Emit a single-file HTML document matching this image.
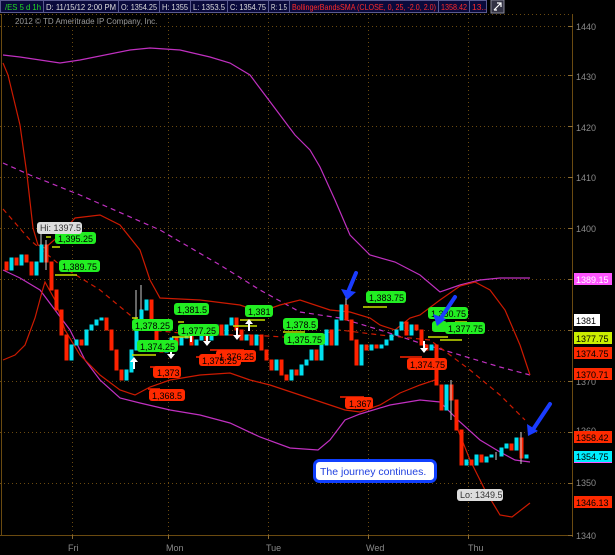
<!DOCTYPE html>
<html><head><meta charset="utf-8"><style>
html,body{margin:0;padding:0;background:#000;}
body{width:615px;height:555px;overflow:hidden;position:relative;font-family:"Liberation Sans",sans-serif;}
svg{position:absolute;left:0;top:0;}
</style></head><body>
<svg width="615" height="555" xmlns="http://www.w3.org/2000/svg" font-family="Liberation Sans, sans-serif">
<rect width="615" height="555" fill="#000"/>
<!-- header -->
<rect x="0" y="0" width="487" height="13" fill="#0a0a3c"/>
<g stroke="#5a5a90" stroke-width="1" fill="none">
<rect x="0.5" y="0.5" width="486" height="12"/>
<path d="M43.5 0v13M118.5 0v13M159.5 0v13M190.5 0v13M227.5 0v13M268.5 0v13M289.5 0v13M438.5 0v13M469.5 0v13"/>
</g>
<g font-size="8.5" fill="#dcdcdc">
<text x="5" y="10" fill="#22dd22" textLength="36" lengthAdjust="spacingAndGlyphs">/ES 5 d 1h</text>
<text x="46" y="10" textLength="70" lengthAdjust="spacingAndGlyphs">D: 11/15/12 2:00 PM</text>
<text x="121" y="10" textLength="36" lengthAdjust="spacingAndGlyphs">O: 1354.25</text>
<text x="162" y="10" textLength="26" lengthAdjust="spacingAndGlyphs">H: 1355</text>
<text x="193" y="10" textLength="32" lengthAdjust="spacingAndGlyphs">L: 1353.5</text>
<text x="230" y="10" textLength="36" lengthAdjust="spacingAndGlyphs">C: 1354.75</text>
<text x="271" y="10" textLength="16" lengthAdjust="spacingAndGlyphs">R: 1.5</text>
<text x="292" y="10" fill="#ff2a2a" textLength="144" lengthAdjust="spacingAndGlyphs">BollingerBandsSMA (CLOSE, 0, 25, -2.0, 2.0)</text>
<text x="441" y="10" fill="#ff2a2a" textLength="26" lengthAdjust="spacingAndGlyphs">1358.42</text>
<text x="472" y="10" fill="#ff2a2a">13..</text>
</g>
<rect x="491" y="0" width="13" height="13" fill="#334" stroke="#889" />
<path d="M494 10l7-7M497 3h4v4M494 10h3" stroke="#fff" stroke-width="1.2" fill="none"/>
<text x="15" y="24" font-size="8" fill="#999">2012 © TD Ameritrade IP Company, Inc.</text>
<!-- grid -->
<g stroke="#6a4a10" stroke-width="1" stroke-dasharray="1,3" fill="none">
<path d="M0 26.5h572M0 75.5h572M0 126.5h572M0 177.5h572M0 228.5h572M0 279.5h572M0 330.5h572M0 381.5h572M0 432.5h572M0 483.5h572"/>
<path d="M72.5 14v521M168.5 14v521M268.5 14v521M368.5 14v521M468.5 14v521"/>
<path d="M0 14.5h572"/>
</g>
<path d="M1.5 14v521M0 535.5h572M572.5 14v523" stroke="#6a4a10" stroke-width="1" fill="none"/>
<g stroke="#8a6a30"><path d="M72.5 535v4M168.5 535v4M268.5 535v4M368.5 535v4M468.5 535v4M568 26.5h5M568 75.5h5M568 126.5h5M568 177.5h5M568 228.5h5M568 279.5h5M568 330.5h5M568 381.5h5M568 432.5h5M568 483.5h5M568 535.5h5"/></g>
<g font-size="9" fill="#8a8a8a">
<text x="576" y="30">1440</text><text x="576" y="80">1430</text><text x="576" y="131">1420</text><text x="576" y="181">1410</text><text x="576" y="232">1400</text><text x="576" y="283">1390</text><text x="576" y="385">1370</text><text x="576" y="434">1360</text><text x="576" y="486">1350</text><text x="576" y="539">1340</text>
<text x="68" y="551">Fri</text><text x="166" y="551">Mon</text><text x="266" y="551">Tue</text><text x="366" y="551">Wed</text><text x="468" y="551">Thu</text>
</g>
<!-- indicator lines -->
<g fill="none" stroke-width="1.2">
<polyline stroke="#c030c0" points="3,55 20,57 60,63 80,60 130,50 150,48 180,50 210,57 230,63 250,75 265,95 280,115 295,135 310,150 320,167 335,200 350,235 370,255 395,262 420,275 440,292 460,285 480,280 500,278 530,278"/>
<polyline stroke="#c030c0" points="3,270 20,278 40,290 55,310 70,330 85,360 100,380 120,398 140,403 170,410 200,415 230,423 260,437 290,448 318,450 330,440 345,420 360,414 390,405 420,400 440,402 460,422 480,440 500,452 515,460 530,462"/>
<polyline stroke="#c030c0" stroke-dasharray="5,4" points="3,163 30,175 80,195 160,230 220,265 260,290 300,312 340,318 380,330 420,343 460,355 500,367 530,375"/>
<polyline stroke="#cc1a00" points="3,63 8,75 20,125 27,175 33,228 38,245 45,248 60,235 75,218 100,215 120,225 140,250 150,280 160,298 200,300 240,305 260,312 280,305 300,300 330,310 350,312 370,318 380,325 395,330 410,318 420,315 440,300 460,286 475,282 490,290 505,310 520,345 530,375"/>
<polyline stroke="#cc1a00" points="3,360 15,355 25,345 35,318 42,292 45,282 55,300 65,330 80,355 100,375 120,390 135,395 150,387 170,380 200,375 230,373 250,380 270,385 300,395 330,405 345,410 360,412 380,405 400,393 420,385 435,380"/>
<polyline stroke="#cc1a00" points="458,430 470,460 485,490 500,515 512,517 530,503"/>
<polyline stroke="#cc1a00" stroke-dasharray="5,4" points="3,209 30,240 60,265 100,290 130,315 150,330 200,335 250,335 300,338 340,330 380,335 430,340 470,370 500,395 525,420"/>
</g>
<!-- candles -->
<g stroke-width="1">
<path fill="#ff2200" stroke="#ff2200" d="M5 262h3v8h-3zM15 258h3v7h-3zM25 255h3v7h-3zM30 262h3v13h-3zM45 245h3v17h-3zM50 262h3v28h-3zM55 290h3v20h-3zM60 310h3v25h-3zM65 335h3v25h-3zM80 340h3v5h-3zM105 318h3v12h-3zM110 330h3v20h-3zM115 350h3v20h-3zM120 370h3v10h-3zM150 300h3v30h-3zM155 330h3v15h-3zM160 345h3v7h-3zM175 338h3v7h-3zM190 330h3v15h-3zM205 330h3v10h-3zM220 325h3v10h-3zM235 318h3v12h-3zM240 330h3v10h-3zM250 335h3v10h-3zM260 335h3v15h-3zM265 350h3v10h-3zM270 360h3v10h-3zM280 360h3v15h-3zM285 375h3v5h-3zM295 370h3v5h-3zM315 350h3v10h-3zM330 330h3v15h-3zM345 305h3v15h-3zM350 320h3v20h-3zM355 340h3v25h-3zM365 345h3v5h-3zM375 345h3v3h-3zM405 322h3v13h-3zM415 325h3v5h-3zM420 330h3v15h-3zM425 345h3v5h-3zM435 345h3v40h-3zM440 385h3v25h-3zM450 385h3v15h-3zM455 400h3v30h-3zM460 430h3v35h-3zM470 460h3v5h-3zM480 455h3v7h-3zM510 444h3v6h-3zM520 438h3v20h-3z"/>
<path fill="#00e0f0" stroke="#00e0f0" d="M10 258h3v12h-3zM20 255h3v10h-3zM35 262h3v13h-3zM40 245h3v17h-3zM70 345h3v15h-3zM75 340h3v5h-3zM85 330h3v15h-3zM90 325h3v5h-3zM95 320h3v5h-3zM100 318h3v2h-3zM125 370h3v10h-3zM130 350h3v22h-3zM135 330h3v20h-3zM140 310h3v20h-3zM145 300h3v10h-3zM165 345h3v7h-3zM170 338h3v7h-3zM180 338h3v7h-3zM185 330h3v8h-3zM195 340h3v5h-3zM200 330h3v10h-3zM210 335h3v5h-3zM215 325h3v10h-3zM225 325h3v10h-3zM230 318h3v7h-3zM245 335h3v5h-3zM255 335h3v10h-3zM275 360h3v10h-3zM290 370h3v10h-3zM300 365h3v10h-3zM305 360h3v5h-3zM310 350h3v10h-3zM320 345h3v15h-3zM325 330h3v15h-3zM335 320h3v25h-3zM340 305h3v15h-3zM360 345h3v20h-3zM370 345h3v5h-3zM380 345h3v3h-3zM385 340h3v5h-3zM390 335h3v5h-3zM395 330h3v5h-3zM400 322h3v8h-3zM410 325h3v10h-3zM430 345h3v5h-3zM445 385h3v25h-3zM465 460h3v5h-3zM475 455h3v10h-3zM485 457h3v5h-3zM490 455h3v2h-3zM500 448h3v8h-3zM505 444h3v4h-3zM515 438h3v12h-3zM525 455h3v3h-3z"/>
<path stroke="#ccc" d="M41 232v13M46 240v30M136 290v40M141 285v25M346 295v10M496 452v8M451 380v40M521 432v32"/>
</g>
<!-- level lines -->
<g stroke-width="1.5" fill="none">
<path stroke="#c8e000" d="M52 247h8M55 275h22M132 355h24M46 237h5M178 322h6M233 326h24M240 320h25M283 332h22M363 307h24M440 340h22M428 337h20M455 322h12M132 318h6M172 337h18"/>
<path stroke="#ff2200" d="M150 367h22M148 389h12M196 357h26M210 350h34M340 397h24M400 357h22"/>
</g>
<!-- white arrows -->
<g fill="#fff">
<path d="M134 357l-4 5h3v7h2v-7h3z"/><path d="M171 359l-4-5h3v-7h2v7h3z"/><path d="M207 346l-4-5h3v-7h2v7h3z"/><path d="M237 340l-4-5h3v-7h2v7h3z"/><path d="M249 319l-4 5h3v7h2v-7h3z"/><path d="M191 330l-4 5h3v7h2v-7h3z"/><path d="M424 353l-4-5h3v-7h2v7h3z"/>
</g>
<!-- labels -->
<g font-size="9">
<g fill="#22ee22"><rect x="55" y="232" width="41" height="12" rx="3"/><rect x="59" y="260" width="41" height="12" rx="3"/><rect x="174" y="303" width="35" height="12" rx="3"/><rect x="132" y="319" width="41" height="12" rx="3"/><rect x="178" y="324" width="41" height="12" rx="3"/><rect x="137" y="340" width="41" height="12" rx="3"/><rect x="245" y="305" width="28" height="12" rx="3"/><rect x="283" y="318" width="35" height="12" rx="3"/><rect x="284" y="333" width="41" height="12" rx="3"/><rect x="366" y="291" width="40" height="12" rx="3"/><rect x="428" y="307" width="40" height="12" rx="3"/><rect x="445" y="322" width="40" height="12" rx="3"/><rect x="432" y="321" width="15" height="11" rx="3"/></g>
<g fill="#000"><text x="58" y="242">1,395.25</text><text x="62" y="270">1,389.75</text><text x="177" y="313">1,381.5</text><text x="135" y="329">1,378.25</text><text x="181" y="334">1,377.25</text><text x="140" y="350">1,374.25</text><text x="248" y="315">1,381</text><text x="286" y="328">1,378.5</text><text x="287" y="343">1,375.75</text><text x="369" y="301">1,383.75</text><text x="431" y="317">1,380.75</text><text x="448" y="332">1,377.75</text></g>
<g fill="#ff2a00"><rect x="153" y="366" width="28" height="12" rx="3"/><rect x="149" y="389" width="36" height="12" rx="3"/><rect x="199" y="354" width="42" height="12" rx="3"/><rect x="216" y="350" width="40" height="12" rx="3"/><rect x="345" y="397" width="28" height="12" rx="3"/><rect x="407" y="358" width="40" height="12" rx="3"/></g>
<g fill="#000"><text x="157" y="376">1,373</text><text x="152" y="399">1,368.5</text><text x="202" y="364">1,375.25</text><text x="219" y="360">1,376.25</text><text x="349" y="407">1,367</text><text x="410" y="368">1,374.75</text></g>
<rect x="37" y="222" width="45" height="12" rx="3" fill="#ddd"/><text x="40" y="231" fill="#333">Hi: 1397.5</text>
<rect x="457" y="489" width="46" height="12" rx="3" fill="#ddd"/><text x="460" y="498" fill="#333">Lo: 1349.5</text>
<!-- right tags -->
<rect x="574" y="273" width="38" height="12" fill="#ff55ff"/><text x="576" y="283" fill="#fff">1389.15</text>
<rect x="574" y="314" width="26" height="12" fill="#fff"/><text x="576" y="324" fill="#000">1381</text>
<rect x="574" y="332" width="38" height="12" fill="#ccee00"/><text x="576" y="342" fill="#000">1377.75</text>
<rect x="574" y="347" width="38" height="12" fill="#ff2a00"/><text x="576" y="357" fill="#000">1374.75</text>
<rect x="574" y="368" width="38" height="12" fill="#ff2a00"/><text x="576" y="378" fill="#000">1370.71</text>
<rect x="574" y="431" width="38" height="12" fill="#ff2a00"/><text x="576" y="441" fill="#000">1358.42</text>
<rect x="574" y="457" width="38" height="6" fill="#ff55ff"/>
<rect x="574" y="451" width="38" height="11" fill="#00eeff"/><text x="576" y="460" fill="#000">1354.75</text>
<rect x="574" y="496" width="38" height="12" fill="#ff2a00"/><text x="576" y="506" fill="#000">1346.13</text>
</g>
<!-- journey box -->
<rect x="314.5" y="460.5" width="121" height="21" rx="5" fill="#fff" stroke="#1040ff" stroke-width="3"/>
<text x="320" y="475" font-size="10.5" fill="#2040e0">The journey continues.</text>
<!-- blue arrows -->
<g stroke="#1a3cff" stroke-width="4" stroke-linecap="round" fill="none">
<path d="M356 273L348 292"/><path d="M455 297L441 318"/><path d="M550 404L534 428"/>
</g>
<g fill="#1a3cff">
<path d="M341 289l6 11 9-8z"/><path d="M433 314l4 12 9-7z"/><path d="M527 424l1 12 10-5z"/>
</g>
</svg>
</body></html>
